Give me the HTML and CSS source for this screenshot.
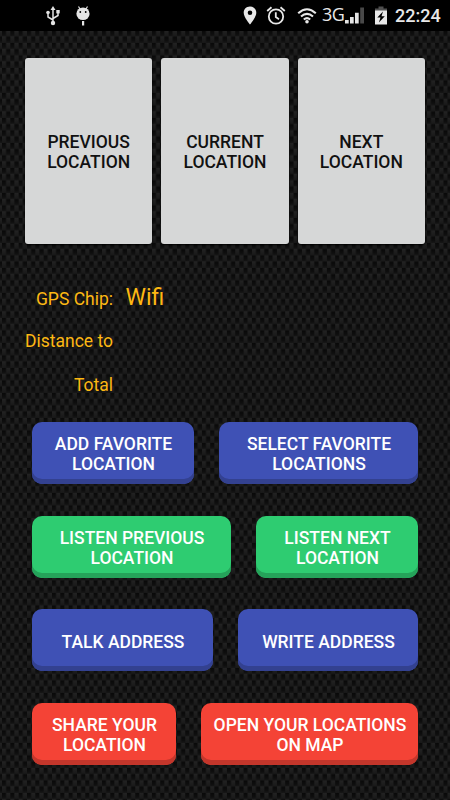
FILE: index.html
```html
<!DOCTYPE html>
<html lang="en">
<head>
<meta charset="utf-8">
<title>Locations</title>
<link rel="stylesheet" href="styles.css">
</head>
<body>
<svg class="weave" width="450" height="800" aria-hidden="true">
  <defs>
    <linearGradient id="fiber" x1="0" y1="0" x2="0" y2="1"><stop offset="0" stop-color="#090909"/><stop offset=".3" stop-color="#0e0e0e"/><stop offset=".5" stop-color="#171717"/><stop offset=".5" stop-color="#222"/><stop offset="1" stop-color="#181818"/></linearGradient>
    <pattern id="carbon" x="2" y="5.500" width="8.330" height="12.500" patternUnits="userSpaceOnUse"><rect width="4.170" height="12.500" fill="url(#fiber)"/><rect x="4.165" y="-6.250" width="4.170" height="12.500" fill="url(#fiber)"/><rect x="4.165" y="6.250" width="4.170" height="12.500" fill="url(#fiber)"/></pattern>
  </defs>
  <rect width="450" height="800" fill="url(#carbon)"/>
</svg>
<header class="status">
  <svg class="usb" width="14" height="20" viewBox="0 0 14 20" fill="none" stroke="#e4e4e4" stroke-width="1.5"><path d="M7 17V3M7 14L2 11V8M7 12.500L12 9.500V6"/><path d="M7 0L9.500 4H4.500Z" fill="#e4e4e4" stroke="none"/><circle cx="7" cy="17" r="2.200" fill="#e4e4e4" stroke="none"/><circle cx="2" cy="6.500" r="1.800" fill="#e4e4e4" stroke="none"/><path d="M10.300 4H13.700V7.400H10.300Z" fill="#e4e4e4" stroke="none"/></svg>
  <svg class="droid" width="14" height="20" viewBox="0 0 14 20"><path d="M2.500.5L4 3M11.500.5L10 3" stroke="#e4e4e4" stroke-width="1.200"/><ellipse cx="7" cy="7.700" rx="6.600" ry="6.300" fill="#e4e4e4"/><path d="M6 15h2.200v4.500H6z" fill="#e4e4e4"/><circle cx="4.300" cy="6" r=".9"/><circle cx="9.700" cy="6" r=".9"/></svg>
  <svg class="pin" width="14" height="19" viewBox="0 0 14 19"><path fill="#e8e8e8" fill-rule="evenodd" d="M7 .5C3.200.5.700 3.300.700 6.800.700 11.200 7 18.500 7 18.500S13.300 11.200 13.300 6.800C13.300 3.300 10.800.5 7 .5ZM7 4.500a2.300 2.300 0 1 1 0 4.600 2.300 2.300 0 0 1 0-4.600Z"/></svg>
  <svg class="alarm" width="20" height="19" viewBox="0 0 20 19" fill="none" stroke="#e8e8e8" stroke-width="1.800"><circle cx="10" cy="10.500" r="7.200"/><path d="M1.200 5L5.500 1.300M18.800 5L14.500 1.300M9.800 6.300V11L13 13.200"/></svg>
  <svg class="wifi" width="20" height="16" viewBox="0 0 20 16" fill="none" stroke="#e8e8e8" stroke-width="2.100"><path d="M1.200 5.300Q10-2.800 18.800 5.300M4 8.500Q10 3.200 16 8.500M6.800 11.500Q10 8.800 13.200 11.500"/><circle cx="10" cy="13.800" r="1.800" fill="#e8e8e8" stroke="none"/></svg>
  <span class="network">3G</span>
  <svg class="signal" width="20" height="17" viewBox="0 0 20 17" fill="#e4e4e4"><path d="M0 13h3.700v3.500H0zM5 10h3.700v6.500H5zM10 5.800h3.700v10.700H10z"/><path fill="#484848" d="M15.200.5H19v16h-3.800z"/></svg>
  <svg class="battery" width="12" height="19" viewBox="0 0 12 19"><path fill="#505050" d="M3.500.5h5v2H12V5H0V2.500h3.500z"/><path fill="#e8e8e8" d="M0 4.500h12v14H0z"/><path d="M8 5.500L2.300 11.500H5.500L3.900 16.500L9.800 10.300H6.500Z"/></svg>
  <time class="clock">22:24</time>
</header>
<main class="screen">
  <section class="cards">
    <button class="card">PREVIOUS<br>LOCATION</button>
    <button class="card">CURRENT<br>LOCATION</button>
    <button class="card">NEXT<br>LOCATION</button>
  </section>
  <dl class="info">
    <dt>GPS Chip:</dt><dd>Wifi</dd>
    <dt>Distance to</dt><dd></dd>
    <dt>Total</dt><dd></dd>
  </dl>
  <section class="actions">
    <div class="row favorites"><button class="btn blue">ADD FAVORITE<br>LOCATION</button><button class="btn blue">SELECT FAVORITE<br>LOCATIONS</button></div>
    <div class="row listen"><button class="btn green">LISTEN PREVIOUS<br>LOCATION</button><button class="btn green">LISTEN NEXT<br>LOCATION</button></div>
    <div class="row address"><button class="btn blue">TALK ADDRESS</button><button class="btn blue">WRITE ADDRESS</button></div>
    <div class="row share"><button class="btn red">SHARE YOUR<br>LOCATION</button><button class="btn red">OPEN YOUR LOCATIONS<br>ON MAP</button></div>
  </section>
</main>
</body>
</html>
```
FILE: styles.css
```css
* { box-sizing: border-box; }
body {
  margin: 0;
  width: 450px;
  height: 800px;
  overflow: hidden;
  font-family: Roboto, "Liberation Sans", sans-serif;
  background: #171717;
}
/* Carbon fibre backdrop behind the whole screen */
.weave { position: absolute; inset: 0; z-index: -1; }
button { border: 0; padding: 0; font: 500 17.5px/20.5px Roboto, "Liberation Sans", sans-serif; }
.status { display: flex; align-items: center; height: 31px; background: #000; color: #e8e8e8; }
.status svg { flex: none; }
.usb { margin-left: 46px; }
.droid { margin-left: 16px; }
.pin { margin-left: 153px; }
.alarm { margin-left: 9px; }
.wifi { margin-left: 11px; }
.network { width: 23px; margin-left: 5px; font: 18px/27px "Open Sans", sans-serif; letter-spacing: -0.6px; padding-bottom: 3px; }
.battery { margin-left: 10px; }
.clock { margin-left: 8px; font: 500 18px/33px Roboto, sans-serif; }
.screen { padding: 27px 25px 0; }
.cards { display: grid; grid-template-columns: repeat(3, 1fr); gap: 9px; height: 186px; }
.card { border-radius: 3px; background: #d6d7d7; color: #111; box-shadow: 0 1px 2px #000; padding-top: 2px; }
.info { display: grid; grid-template-columns: 88px 1fr; grid-auto-rows: 43.3px; column-gap: 12.5px; align-items: baseline; margin: 40px 0 0; color: #fdb813; }
.info dt { text-align: right; font-size: 17.5px; line-height: 28px; }
.info dd { margin: 0; font-size: 23px; line-height: 27px; }
.actions { display: grid; gap: 31.700px; margin: 8px 7px 0; }
.row { display: grid; gap: 25px; height: 62px; }
.favorites { grid-template-columns: 162px 1fr; }
.listen { grid-template-columns: 199px 1fr; }
.address { grid-template-columns: 181px 1fr; }
.share { grid-template-columns: 144px 1fr; }
.btn { border-radius: 10px; color: #fff; padding: 3px 0 0 1px; }
/* Raised buttons: the face keeps its own rounded bottom above the darker lip */
.blue { background: #3f51b5; box-shadow: inset 0 -5px #334190; }
.green { background: #2ecc71; box-shadow: inset 0 -5px #25a35a; }
.red { background: #f44336; box-shadow: inset 0 -5px #c3362b; }
```
